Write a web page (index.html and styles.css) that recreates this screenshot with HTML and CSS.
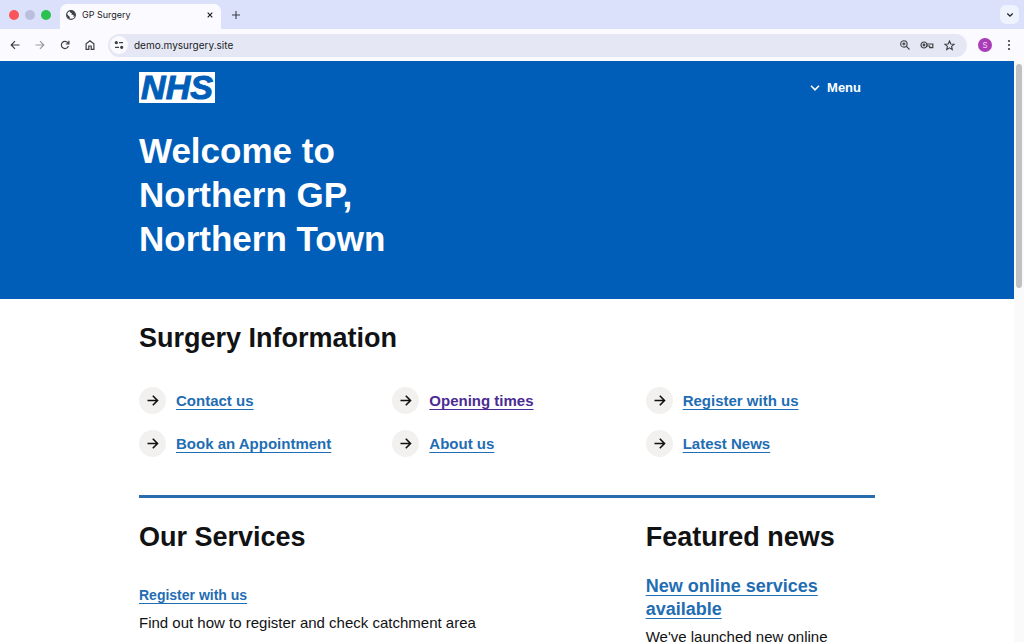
FILE: index.html
```
<!DOCTYPE html>
<html lang="en">
<head>
    <meta charset="UTF-8">
    <meta name="viewport" content="width=device-width, initial-scale=1.0">
    <title>GP Surgery</title>
    <link rel="stylesheet" href="styles.css">
</head>
<body>
    <svg class="sprite" aria-hidden="true">
        <symbol id="arrow" viewBox="0 0 27 27">
            <path d="M8.500 13.500h10M13.800 8.800l4.700 4.700-4.700 4.700" fill="none" stroke="currentColor" stroke-width="1.600"/>
        </symbol>
    </svg>

    <!-- Tabs -->
    <div class="tab-strip">
        <div class="lights">
            <span class="light red"></span>
            <span class="light grey"></span>
            <span class="light green"></span>
        </div>
        <div class="tab">
            <svg width="10" height="10" viewBox="0 0 10 10">
                <circle cx="5" cy="5" r="4.400" fill="none" stroke="#3c4043" stroke-width="1.100"/>
                <path d="M1 4.200l2.700 2.600.1 2.300L1.800 8 .8 5.500zM4 1l.3 1.700L6 3.200 5.200 4.600l2.500.4-.5 1.800L9 6.200l.3-2L7.700 1.600 5.500.7z" fill="#3c4043"/>
            </svg>
            <span class="tab-title">GP Surgery</span>
            <button class="icon-btn tab-close" aria-label="Close tab">
                <svg width="6" height="6" viewBox="0 0 6 6"><path d="M.7.7l4.600 4.600M5.300.7L.7 5.300" stroke="#202124" stroke-width="1.200"/></svg>
            </button>
        </div>
        <button class="icon-btn" aria-label="New tab">
            <svg width="8" height="8" viewBox="0 0 8 8"><path d="M4 0v8M0 4h8" stroke="#3c4043" stroke-width="1.100"/></svg>
        </button>
        <button class="icon-btn tab-search" aria-label="Search tabs">
            <svg width="8" height="6" viewBox="0 0 8 6"><path d="M1.300 1.500L4 4.200l2.700-2.700" fill="none" stroke="#202124" stroke-width="1.300"/></svg>
        </button>
    </div>

    <!-- Toolbar -->
    <div class="toolbar">
        <button class="icon-btn" aria-label="Back">
            <svg width="10" height="10" viewBox="0 0 10 10"><path d="M9.500 5H1.300M5 1.200L1.200 5 5 8.800" fill="none" stroke="#3c4043" stroke-width="1.200"/></svg>
        </button>
        <button class="icon-btn faded" aria-label="Forward">
            <svg width="10" height="10" viewBox="0 0 10 10"><path d="M.5 5h8.200M5 1.200L8.800 5 5 8.800" fill="none" stroke="#3c4043" stroke-width="1.200"/></svg>
        </button>
        <button class="icon-btn" aria-label="Reload">
            <svg width="10" height="10" viewBox="0 0 10 10"><path d="M8.400 6A3.600 3.600 0 1 1 7.800 2.700L8.600 3.800M8.900.8v3.200H5.700" fill="none" stroke="#3c4043" stroke-width="1.200"/></svg>
        </button>
        <button class="icon-btn" aria-label="Home">
            <svg width="10" height="10" viewBox="0 0 10 10"><path d="M1.100 9.400V3.900L5 .8l3.900 3.100v5.500H6.200V6H3.800v3.400z" fill="none" stroke="#3c4043" stroke-width="1.200"/></svg>
        </button>
        <div class="address">
            <button class="icon-btn site-info" aria-label="Site information">
                <svg width="10" height="10" viewBox="0 0 10 10"><g stroke="#3c4043" stroke-width="1.200"><path d="M5 2.700h4M1 7.300h4"/><circle cx="2.300" cy="2.700" r="1" fill="#3c4043"/><circle cx="7.700" cy="7.300" r="1" fill="#3c4043"/></g></svg>
            </button>
            <input class="url" type="text" value="demo.mysurgery.site" aria-label="Address">
            <button class="icon-btn" aria-label="Zoom">
                <svg width="10" height="10" viewBox="0 0 10 10"><g fill="none" stroke="#3c4043" stroke-width="1.100"><circle cx="3.900" cy="3.900" r="3.200"/><path d="M6.200 6.200l3.300 3.300M2.300 3.900h3.200M3.900 2.300v3.200"/></g></svg>
            </button>
            <button class="icon-btn" aria-label="Passwords">
                <svg width="14" height="8" viewBox="0 0 14 8"><g fill="none" stroke="#3c4043" stroke-width="1.200"><circle cx="4" cy="4" r="3"/><circle cx="4" cy="4" r=".8"/><path d="M6.900 3h5.900v3.700H9.700V5H6.900"/></g></svg>
            </button>
            <button class="icon-btn" aria-label="Bookmark">
                <svg width="11" height="11" viewBox="0 0 11 11"><path d="M5.500 1l1.300 3 3.200.3-2.400 2.100.7 3.200-2.800-1.700-2.800 1.700.7-3.200L1 4.300 4.200 4z" fill="none" stroke="#3c4043" stroke-width="1.100"/></svg>
            </button>
        </div>
        <button class="icon-btn avatar" aria-label="Profile">S</button>
        <button class="icon-btn more" aria-label="More">
            <svg width="4" height="12" viewBox="0 0 4 12"><g fill="#3c4043"><circle cx="2" cy="2" r="1.100"/><circle cx="2" cy="6" r="1.100"/><circle cx="2" cy="10" r="1.100"/></g></svg>
        </button>
    </div>

    <div class="viewport">
        <div class="page">
            <header class="header">
                <div class="container">
                    <div class="header-top">
                        <a href="#" class="logo">NHS</a>
                        <button class="menu">
                            <svg width="10" height="6" viewBox="0 0 10 6"><path d="M1 .8l4 4 4-4" fill="none" stroke="currentColor" stroke-width="1.600"/></svg>
                            Menu
                        </button>
                    </div>
                    <h1>Welcome to Northern GP, Northern Town</h1>
                </div>
            </header>

            <main class="container">
                <section class="info">
                    <h2>Surgery Information</h2>
                    <ul class="quick-links">
                        <li><svg class="arrow"><use href="#arrow"/></svg><a href="#">Contact us</a></li>
                        <li><svg class="arrow"><use href="#arrow"/></svg><a href="#" class="visited">Opening times</a></li>
                        <li><svg class="arrow"><use href="#arrow"/></svg><a href="#">Register with us</a></li>
                        <li><svg class="arrow"><use href="#arrow"/></svg><a href="#">Book an Appointment</a></li>
                        <li><svg class="arrow"><use href="#arrow"/></svg><a href="#">About us</a></li>
                        <li><svg class="arrow"><use href="#arrow"/></svg><a href="#">Latest News</a></li>
                    </ul>
                </section>

                <div class="columns">
                    <section class="services">
                        <h2>Our Services</h2>
                        <h3><a href="#">Register with us</a></h3>
                        <p>Find out how to register and check catchment area</p>
                    </section>
                    <section class="news">
                        <h2>Featured news</h2>
                        <h3><a href="#">New online services available</a></h3>
                        <p>We've launched new online</p>
                    </section>
                </div>
            </main>
        </div>
        <div class="scrollbar"><div class="thumb"></div></div>
    </div>
</body>
</html>
```
FILE: styles.css
```
:root {
    --nhs-blue: #005eb8;
    --link: #1f6db3;
    --visited: #4c2c92;
    --text: #111214;
    --strip: #dbe1fa;
    --toolbar: #fbfaff;
    --field: #e5e8f4;
}

* {
    margin: 0;
    padding: 0;
    box-sizing: border-box;
}

body {
    height: 100vh;
    overflow: hidden;
    display: flex;
    flex-direction: column;
    font-family: "Liberation Sans", Arial, sans-serif;
    color: var(--text);
    background: #fff;
}

svg {
    display: block;
    flex-shrink: 0;
}

button {
    border: none;
    background: none;
    font: inherit;
    color: inherit;
}

.sprite {
    position: absolute;
    width: 0;
    height: 0;
}

.icon-btn {
    display: flex;
    align-items: center;
    justify-content: center;
    flex-shrink: 0;
}

/* Tabs */
.tab-strip {
    display: flex;
    align-items: center;
    height: 29px;
    flex-shrink: 0;
    padding: 0 5px 0 9px;
    background: var(--strip);
    font-family: Inter, sans-serif;
}

.lights {
    display: flex;
    gap: 6px;
    margin-right: 9px;
}

.light {
    width: 10px;
    height: 10px;
    border-radius: 50%;
}

.red { background: #fb5459; }
.grey { background: #b9bfdc; }
.green { background: #2bc14e; }

.tab {
    display: flex;
    align-items: center;
    align-self: flex-end;
    gap: 6px;
    width: 161px;
    height: 25px;
    margin-right: 11px;
    padding: 0 8px 4px 6px;
    border-radius: 7px 7px 0 0;
    background: var(--toolbar);
}

.tab-title {
    flex: 1;
    font-size: 9px;
    line-height: 12px;
    color: #202124;
}

.tab-search {
    width: 19px;
    height: 19px;
    margin-left: auto;
    border-radius: 6px;
    background: #eff3fe;
}

/* Toolbar */
.toolbar {
    display: flex;
    align-items: center;
    gap: 15px;
    height: 32px;
    flex-shrink: 0;
    padding: 0 13px 0 10px;
    background: var(--toolbar);
    font-family: Inter, sans-serif;
}

.faded {
    opacity: 0.5;
}

.address {
    display: flex;
    align-items: center;
    gap: 10px;
    flex: 1;
    height: 23px;
    margin-left: -2px;
    padding: 0 12px 0 2px;
    border-radius: 12px;
    background: var(--field);
}

.site-info {
    width: 18px;
    height: 18px;
    border-radius: 50%;
    background: var(--toolbar);
}

.url {
    flex: 1;
    min-width: 0;
    margin-left: -4px;
    border: none;
    background: none;
    font-family: inherit;
    font-size: 10px;
    color: #202124;
}

.avatar {
    width: 14px;
    height: 14px;
    margin-left: -4px;
    border-radius: 50%;
    background: #a93db8;
    color: #f3d9f5;
    font-size: 8px;
}

.more {
    width: 4px;
}

/* Page */
.viewport {
    display: flex;
    flex: 1;
    min-height: 0;
}

.page {
    flex: 1;
    overflow: hidden;
}

.scrollbar {
    width: 10px;
    padding: 3px 2px;
    background: #fafafa;
}

.thumb {
    height: 39%;
    border-radius: 3px;
    background: #c1c1c1;
}

.container {
    max-width: 736px;
    margin: 0 auto;
}

.header {
    padding: 11px 0 38px;
    background: var(--nhs-blue);
    color: #fff;
}

.header-top {
    display: flex;
    justify-content: space-between;
    align-items: center;
    margin-bottom: 26px;
}

.logo {
    width: 76px;
    height: 31px;
    background: #fff;
    color: var(--nhs-blue);
    font-size: 34px;
    font-style: italic;
    font-weight: bold;
    line-height: 31px;
    text-align: center;
    text-decoration: none;
    -webkit-text-stroke: 1px var(--nhs-blue);
}

.menu {
    display: flex;
    align-items: center;
    gap: 7px;
    margin-right: 14px;
    font-size: 13px;
    font-weight: bold;
}

h1 {
    max-width: 300px;
    font-size: 35px;
    line-height: 44px;
}

h2 {
    font-size: 27px;
    line-height: 36px;
}

a {
    color: var(--link);
    text-decoration-thickness: 1px;
    text-underline-offset: 3px;
    text-decoration-skip-ink: none;
}

.visited {
    color: var(--visited);
}

.info {
    padding: 21px 0 38px;
    border-bottom: 3px solid #2a6cad;
}

.quick-links {
    display: grid;
    grid-template-columns: repeat(3, 1fr);
    gap: 16px 24px;
    margin-top: 31px;
    list-style: none;
}

.quick-links li {
    display: flex;
    align-items: center;
    gap: 10px;
    font-size: 15px;
    font-weight: bold;
}

.arrow {
    width: 27px;
    height: 27px;
    border-radius: 50%;
    background: #f2f1f0;
    color: #111;
}

.columns {
    display: grid;
    grid-template-columns: repeat(3, 1fr);
    column-gap: 24px;
    padding-top: 21px;
}

.services {
    grid-column: span 2;
}

h3 {
    font-size: 14px;
    line-height: 23px;
    margin-bottom: 4px;
}

.services h3 {
    margin-top: 29px;
}

.news h3 {
    margin-top: 20px;
    font-size: 18px;
}

p {
    font-size: 15px;
    line-height: 23px;
}
```
